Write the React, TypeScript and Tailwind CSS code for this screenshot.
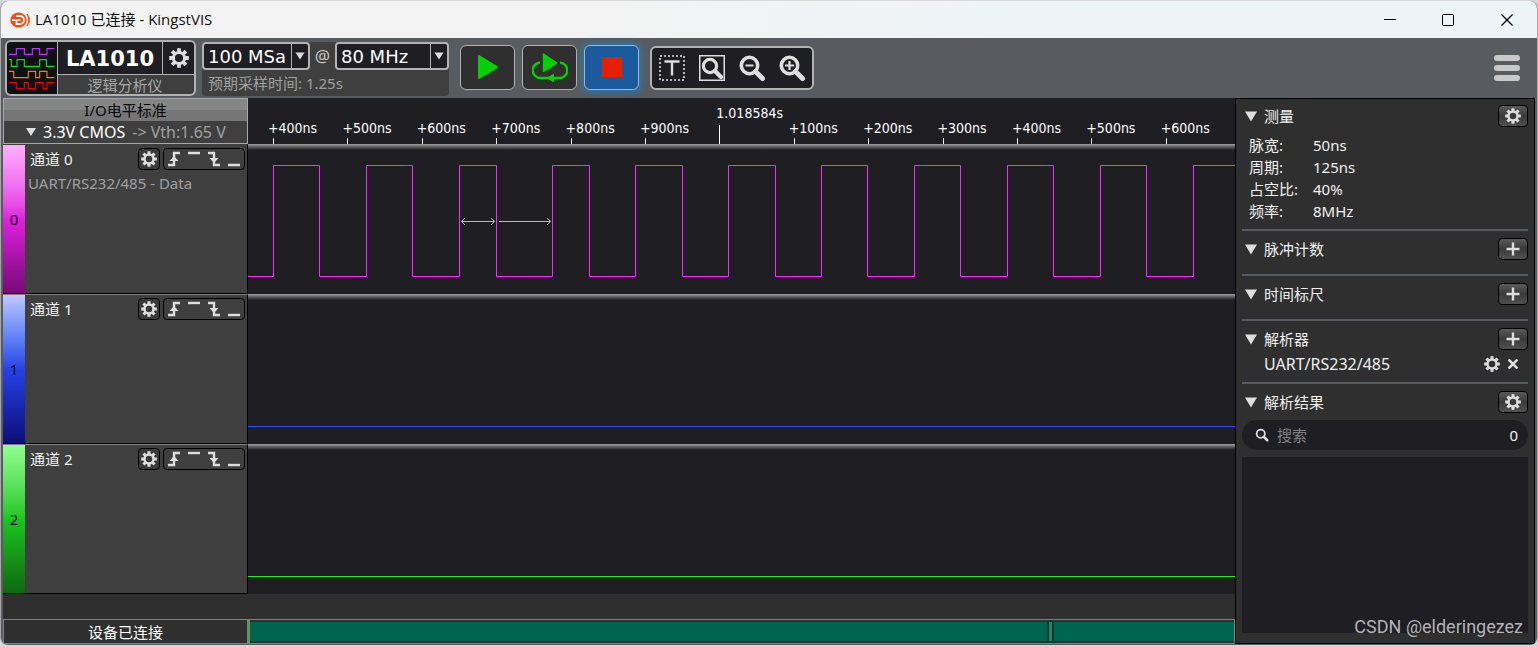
import React from 'react';

interface Channel {
    id: number;
    name: string;
    decoder?: string;
    bar: string;
    stroke: string;
    path: string;
}

const EDGES = [25, 71, 118, 164, 211, 248, 304, 341, 387, 434, 480, 527, 573, 619, 666, 712, 759, 805, 852, 898, 945];
const WAVE_WIDTH = 987;

const squareWave = EDGES.reduce(
    (path, x, i) => `${path}H${x + 0.5}V${i % 2 === 0 ? 21.5 : 132.5}`,
    'M0 132.5'
) + `H${WAVE_WIDTH}`;

const CHANNELS: Channel[] = [
    {
        id: 0,
        name: '通道 0',
        decoder: 'UART/RS232/485 - Data',
        bar: 'from-[#ffb0ff] via-[#e020e0] to-[#780a78]',
        stroke: '#ff28ff',
        path: squareWave,
    },
    {
        id: 1,
        name: '通道 1',
        bar: 'from-[#c0c8ff] via-[#2840e8] to-[#0c1078]',
        stroke: '#2850ff',
        path: `M0 132.5H${WAVE_WIDTH}`,
    },
    {
        id: 2,
        name: '通道 2',
        bar: 'from-[#90ff90] via-[#18c820] to-[#106810]',
        stroke: '#20f020',
        path: `M0 132.5H${WAVE_WIDTH}`,
    },
];

const TICKS = ['+400ns', '+500ns', '+600ns', '+700ns', '+800ns', '+900ns', '', '+100ns', '+200ns', '+300ns', '+400ns', '+500ns', '+600ns'];

const MEASUREMENTS = [
    ['脉宽:', '50ns'],
    ['周期:', '125ns'],
    ['占空比:', '40%'],
    ['频率:', '8MHz'],
];

const Gear = ({ className }: { className: string }) => (
    <svg viewBox="-10 -10 20 20" className={className} stroke="#dedede" fill="none">
        <circle r="5.6" strokeWidth="3" />
        {[0, 45, 90, 135, 180, 225, 270, 315].map(a => (
            <path key={a} d="M0 -6V-9.8" strokeWidth="3.8" transform={`rotate(${a})`} />
        ))}
    </svg>
);

const Plus = () => (
    <svg viewBox="0 0 14 14" className="size-3.5" stroke="#dedede" strokeWidth="2.4">
        <path d="M7 0.5V13.5M0.5 7H13.5" />
    </svg>
);

const Magnifier = ({ children, className = 'size-7' }: { children?: React.ReactNode; className?: string }) => (
    <svg viewBox="0 0 28 28" className={className} fill="none" stroke="#dedede">
        <circle cx="11.5" cy="11.5" r="8.2" strokeWidth="3.6" />
        <path d="M17.5 17.5L24.5 24.5" strokeWidth="5" strokeLinecap="round" />
        {children}
    </svg>
);

const TitleBar = () => (
    <header className="flex h-[37px] shrink-0 items-center bg-linear-to-r from-[#f3f3f3] from-40% to-[#ecf4f8] to-70% pl-2">
        <svg viewBox="0 0 22 18" className="mr-1 h-[18px] w-[22px]">
            <ellipse cx="9.5" cy="9" rx="8.2" ry="7.6" fill="#ff4a10" />
            <path d="M7 5H11A4 4 0 0 1 11 13H7.5V9.2M3 9.2H11.5" fill="none" stroke="#fff" strokeWidth="1.8" />
            <path d="M15.8 1.5A9 9 0 0 1 15.8 16.5" fill="none" stroke="#f3f3f3" strokeWidth="1.4" />
            <path d="M18 3A8.5 8.5 0 0 1 18 15A12 12 0 0 0 18 3Z" fill="#ff4a10" stroke="#ff4a10" strokeWidth="1" />
        </svg>
        <h1 className="pb-0.5 font-['Open_Sans','Noto_Sans_CJK_SC',sans-serif] text-[15px] leading-5 text-[#101010]">LA1010 已连接 - KingstVIS</h1>
        <div className="ml-auto flex h-full">
            <button aria-label="Minimize" className="grid w-[58px] place-items-center">
                <svg viewBox="0 0 12 12" className="size-3" stroke="#000"><path d="M0 5.5H12" /></svg>
            </button>
            <button aria-label="Maximize" className="grid w-[58px] place-items-center">
                <svg viewBox="0 0 12 12" className="size-3" stroke="#000" fill="none"><rect x="0.5" y="0.5" width="11" height="11" rx="1" /></svg>
            </button>
            <button aria-label="Close" className="grid w-[60px] place-items-center">
                <svg viewBox="0 0 12 12" className="size-3" stroke="#000" strokeWidth="1.2"><path d="M0.5 0.5L11.5 11.5M11.5 0.5L0.5 11.5" /></svg>
            </button>
        </div>
    </header>
);

const ToolbarSelect = ({ label, value, className }: { label: string; value: string; className: string }) => (
    <div className={`relative h-7 rounded border-2 border-[#b2b2b2] bg-[#1f1e23] ${className}`}>
        <select aria-label={label} className="h-full w-full appearance-none bg-transparent pt-px pl-1 font-['DejaVu_Sans',sans-serif] text-lg leading-6 text-white">
            <option>{value}</option>
        </select>
        <span className="pointer-events-none absolute inset-y-0 right-0 grid w-[17px] place-items-center border-l border-[#b2b2b2]">
            <svg viewBox="0 0 10 8" className="h-2 w-2.5"><path d="M0.5 0.5H9.5L5 7.5Z" fill="#dedede" /></svg>
        </span>
    </div>
);

const Toolbar = () => (
    <div className="flex h-[60px] shrink-0 items-center bg-[#585b5f] pl-1">
        <div className="flex h-14 w-[191px] overflow-hidden rounded-md border-2 border-[#b2b2b2] bg-[#3f3f3f]">
            <svg viewBox="22 126 150 156" className="h-[52px] w-[50px] bg-[#101012]" fill="none" strokeWidth="3.4">
                <path d="M28 163H50V146H74V163H98V146H120V163H142V146H164" stroke="#c030ff" />
                <path d="M28 179H35V199H52V179H74V199H120V179H140V199H164" stroke="#00e020" />
                <path d="M28 214H42V233H86V214H108V233H120V214H142V233H164" stroke="#ff8000" />
                <path d="M28 248H50V266H74V248H86V266H108V248H130V266H142V248H164" stroke="#f00000" />
            </svg>
            <div className="flex flex-1 flex-col border-l border-[#b2b2b2]">
                <div className="flex h-[33px] border-b border-[#b2b2b2] bg-[#1f1e23]">
                    <span className="flex-1 pt-px text-center font-['DejaVu_Sans',sans-serif] text-[21px] leading-8 font-bold text-white">LA1010</span>
                    <button aria-label="Device settings" className="grid w-8 place-items-center border-l border-[#b2b2b2]">
                        <Gear className="size-5" />
                    </button>
                </div>
                <span className="pr-0.5 text-center text-[15px] leading-5 text-[#a8a8a8]">逻辑分析仪</span>
            </div>
        </div>
        <div className="mt-0.5 ml-1.5 h-[54px] w-[247px] rounded bg-[#3f3f3f]">
            <div className="flex items-center justify-between">
                <ToolbarSelect label="Sample depth" value="100 MSa" className="w-[108px]" />
                <span className="text-[17px] leading-7 text-[#c8c8c8]">@</span>
                <ToolbarSelect label="Sample rate" value="80 MHz" className="w-[114px]" />
            </div>
            <p className="pl-1.5 text-[15px] leading-[26px] text-[#a0a0a0]">预期采样时间: 1.25s</p>
        </div>
        <div className="mb-0.5 ml-[11px] flex gap-[7px]">
            <button aria-label="Start" className="grid h-[45px] w-[55px] place-items-center rounded-md border border-[#b2b2b2] bg-[#2f2f2f]">
                <svg viewBox="0 0 22 26" className="h-[26px] w-[22px]"><path d="M2 2L20 13L2 24Z" fill="#00d200" stroke="#00d200" strokeWidth="2" strokeLinejoin="round" /></svg>
            </button>
            <button aria-label="Start repeated" className="grid h-[45px] w-[55px] place-items-center rounded-md border border-[#b2b2b2] bg-[#2f2f2f]">
                <svg viewBox="0 0 36 30" className="h-[30px] w-9" fill="none" stroke="#00d200">
                    <path d="M8 10.5A7.5 7.5 0 0 0 9 26H27A7.5 7.5 0 0 0 28 10.5" strokeWidth="2.4" />
                    <path d="M11.5 2L25 11L11.5 19.5Z" fill="#00d200" strokeWidth="1.4" strokeLinejoin="round" />
                    <path d="M15.5 26L21.5 22.3V29.7Z" fill="#00d200" />
                </svg>
            </button>
            <button aria-label="Stop" className="grid h-[45px] w-[55px] place-items-center rounded-md border border-[#b2b2b2] bg-[#1c5a9e] shadow-[0_0_6px_2px_#2878b4]">
                <span className="size-5 bg-[#e42000]" />
            </button>
        </div>
        <div className="ml-[11px] flex h-11 rounded-md border-2 border-[#b2b2b2] bg-[#1f1e23]">
            <button aria-label="Trigger position" className="grid w-10 place-items-center">
                <svg viewBox="0 0 26 26" className="size-[26px]" fill="none" stroke="#dedede">
                    <rect x="1" y="1" width="24" height="24" strokeWidth="1.6" strokeDasharray="2 2" />
                    <path d="M5.5 6.5H20.5M13 6.5V20.5" strokeWidth="2.4" />
                </svg>
            </button>
            <button aria-label="Zoom to fit" className="grid w-10 place-items-center">
                <svg viewBox="0 0 26 26" className="size-[26px]" fill="none" stroke="#dedede">
                    <rect x="0.75" y="0.75" width="24.5" height="24.5" strokeWidth="1.5" />
                    <circle cx="11" cy="11" r="6.6" strokeWidth="3.2" />
                    <path d="M16 16L22 22" strokeWidth="4.4" strokeLinecap="round" />
                </svg>
            </button>
            <button aria-label="Zoom out" className="grid w-10 place-items-center">
                <Magnifier><path d="M7.5 11.5H15.5" strokeWidth="2.2" /></Magnifier>
            </button>
            <button aria-label="Zoom in" className="grid w-10 place-items-center">
                <Magnifier><path d="M7 11.5H16M11.5 7V16" strokeWidth="2.2" /></Magnifier>
            </button>
        </div>
        <button aria-label="Menu" className="mr-[17px] ml-auto flex w-[26px] flex-col gap-1">
            <span className="h-1.5 w-full rounded-full bg-[#c8c8c8]" />
            <span className="h-1.5 w-full rounded-full bg-[#c8c8c8]" />
            <span className="h-1.5 w-full rounded-full bg-[#c8c8c8]" />
        </button>
    </div>
);

const TRIGGERS = [
    { label: 'Rising edge', path: 'M4 16H10V4H16', arrow: 'M5.5 12L10 7L14.5 12Z' },
    { label: 'High level', path: 'M4 4H16', arrow: '' },
    { label: 'Falling edge', path: 'M4 4H10V16H16', arrow: 'M5.5 9L10 14L14.5 9Z' },
    { label: 'Low level', path: 'M4 16H16', arrow: '' },
];

const ChannelRow = ({ channel }: { channel: Channel }) => (
    <div className="flex h-[150px] shrink-0">
        <div className={`flex w-[245px] shrink-0 border-t border-r border-b border-black bg-[#3f3f3f] ${channel.id > 0 ? 'border-t-[#7e7e7e]' : 'border-t-transparent'}`}>
            <span className={`grid w-[22px] shrink-0 place-items-center bg-linear-to-b text-[15px] text-[#101010] ${channel.bar}`}>{channel.id}</span>
            <div className="flex-1 pt-[3px] pr-0.5 pl-[3px]">
                <div className="flex h-[22px] items-center gap-[3px] pl-0.5">
                    <span className="flex-1 text-[15px] leading-[22px] text-[#f0f0f0]">{channel.name}</span>
                    <button aria-label={`${channel.name} settings`} className="grid size-[22px] place-items-center rounded border border-black bg-[#3a3a3a]">
                        <Gear className="size-4" />
                    </button>
                    <div className="flex h-[22px] rounded border border-black">
                        {TRIGGERS.map(t => (
                            <button key={t.label} aria-label={t.label}>
                                <svg viewBox="0 0 20 20" className="size-5" fill="none" stroke="#dedede" strokeWidth="2.4">
                                    <path d={t.path} />
                                    {t.arrow && <path d={t.arrow} fill="#dedede" stroke="none" />}
                                </svg>
                            </button>
                        ))}
                    </div>
                </div>
                {channel.decoder && <p className="text-[15px] leading-[26px] text-[#a0a0a0]">{channel.decoder}</p>}
            </div>
        </div>
        <div className="min-w-0 flex-1 bg-linear-to-b from-[#a0a0a0] to-[#1f1e23] to-[6px]">
            <svg viewBox={`0 0 ${WAVE_WIDTH} 150`} preserveAspectRatio="none" className="h-full w-full" fill="none">
                <path d={channel.path} stroke={channel.stroke} vectorEffect="non-scaling-stroke" />
                {/* pulse width and period arrows */}
                {channel.id === 0 && (
                    <path
                        d="M213 77.5H246.5M217 74L213.5 77.5L217 81M243 74L246.5 77.5L243 81M251 77.5H302.5M299 74L302.5 77.5L299 81"
                        stroke="#b8b8b8"
                        vectorEffect="non-scaling-stroke"
                    />
                )}
            </svg>
        </div>
    </div>
);

const Ruler = () => (
    <div className="flex h-[46px] shrink-0">
        <div className="flex w-[245px] shrink-0 flex-col border border-[#a8a8a8] bg-[#3f3f3f]">
            <div className="h-[22px] bg-linear-to-b from-[#868686] from-50% to-[#767676] to-50% text-center text-[15px] leading-[22px] text-[#080808]">I/O电平标准</div>
            <button className="flex flex-1 items-center gap-[7px] pl-[22px] text-base leading-5 text-white">
                <svg viewBox="0 0 10 8" className="h-2 w-2.5"><path d="M0 0H10L5 8Z" fill="#dedede" /></svg>
                <span>3.3V CMOS</span>
                <span className="text-[#a0a0a0]">-&gt; Vth:1.65 V</span>
            </button>
        </div>
        <div className="flex flex-1 bg-[#1f1e23] pl-5 font-['DejaVu_Sans_Condensed','DejaVu_Sans',sans-serif] text-sm text-white">
            {TICKS.map((tick, i) => (
                <div key={i} className="flex min-w-0 flex-1 flex-col justify-end whitespace-nowrap">
                    {tick ? (
                        <>
                            <span className="leading-5">{tick}</span>
                            <span className="ml-[5px] h-1.5 w-px bg-white" />
                        </>
                    ) : (
                        <>
                            <span className="pl-0.5 leading-5">1.018584s</span>
                            <span className="mt-0.5 ml-[5px] h-[19px] w-px bg-white" />
                        </>
                    )}
                </div>
            ))}
        </div>
    </div>
);

const StatusBar = () => (
    <div className="flex h-[25px] shrink-0 border border-[#808080] bg-[#2f2f2f]">
        <div className="w-[245px] border-r-2 border-[#808080] text-center text-[15px] leading-6 text-white">设备已连接</div>
        <div className="flex flex-1 border-l border-[#20c020] py-0.5">
            <span className="flex-1 bg-[#00654f]" />
            <span className="-my-0.5 w-[7px] shrink-0 border-2 border-[#0c3a30] bg-[#28806c]" />
            <span className="w-[180px] bg-[#00654f]" />
        </div>
    </div>
);

interface SectionProps {
    title: string;
    action: 'gear' | 'plus';
    className: string;
    children?: React.ReactNode;
}

const Section = ({ title, action, className, children }: SectionProps) => (
    <section className={className}>
        <div className="flex h-[22px] items-center justify-between pl-[3px]">
            <button className="flex items-center gap-[7px] text-[15px] leading-[22px] text-[#f0f0f0]">
                <svg viewBox="0 0 12 11" className="h-[11px] w-3"><path d="M0 0.5H12L6 10.5Z" fill="#dedede" /></svg>
                {title}
            </button>
            <button aria-label={`${title} ${action}`} className="grid h-[22px] w-[30px] place-items-center rounded border border-black bg-linear-to-b from-[#5a5a5a] via-[#3a3a3a] to-[#505050]">
                {action === 'gear' ? <Gear className="size-4" /> : <Plus />}
            </button>
        </div>
        {children}
    </section>
);

const SidePanel = () => (
    <aside className="flex w-[300px] shrink-0 flex-col border border-black bg-[#2f2f2f] px-1.5 pt-1.5 pb-2.5">
        <Section title="测量" action="gear" className="border-b-2 border-[#585b5f] pb-[7px]">
            <table className="mt-[7px] ml-[7px] text-[15px] text-[#f0f0f0]">
                <tbody>
                    {MEASUREMENTS.map(([name, value]) => (
                        <tr key={name} className="h-[22px]">
                            <th className="w-16 p-0 text-left leading-[22px] font-normal">{name}</th>
                            <td className="p-0 leading-[22px]">{value}</td>
                        </tr>
                    ))}
                </tbody>
            </table>
        </Section>
        <Section title="脉冲计数" action="plus" className="border-b-2 border-[#585b5f] pt-[7px] pb-3.5" />
        <Section title="时间标尺" action="plus" className="border-b-2 border-[#585b5f] pt-[7px] pb-3.5" />
        <Section title="解析器" action="plus" className="border-b-2 border-[#585b5f] pt-[7px] pb-[7px]">
            <div className="mt-[3px] flex h-[22px] items-center gap-2 pr-2.5 pl-[22px]">
                <span className="flex-1 text-base leading-[22px] text-[#f0f0f0]">UART/RS232/485</span>
                <button aria-label="Decoder settings"><Gear className="size-4" /></button>
                <button aria-label="Remove decoder">
                    <svg viewBox="0 0 10 10" className="size-2.5" stroke="#dedede" strokeWidth="2.6"><path d="M0.5 0.5L9.5 9.5M9.5 0.5L0.5 9.5" /></svg>
                </button>
            </div>
        </Section>
        <Section title="解析结果" action="gear" className="pt-[7px]" />
        <div className="mt-[7px] flex h-[30px] shrink-0 items-center gap-2 rounded-full bg-[#1f1e23] pr-2.5 pl-[13px] text-[15px]">
            <Magnifier className="size-3.5" />
            <input aria-label="搜索" placeholder="搜索" className="min-w-0 flex-1 bg-transparent text-white outline-none placeholder:text-[#808080]" />
            <span className="text-[#f0f0f0]">0</span>
        </div>
        <div className="mt-[7px] flex-1 bg-[#1f1e23]" />
    </aside>
);

export default function App() {
    return (
        <div className="h-screen bg-[#d4d6d8] pt-px pb-0.5 font-['Noto_Sans','Noto_Sans_CJK_SC',sans-serif]">
            <div className="relative flex h-full flex-col overflow-hidden rounded-lg border-x border-[#a8a8a8] bg-[#585b5f]">
                <TitleBar />
                <Toolbar />
                <div className="flex min-h-0 flex-1 px-0.5 pb-px">
                    <main className="flex min-w-0 flex-1 flex-col bg-[#2f2f2f]">
                        <Ruler />
                        {CHANNELS.map(c => (
                            <ChannelRow key={c.id} channel={c} />
                        ))}
                        <div className="flex-1" />
                        <StatusBar />
                    </main>
                    <SidePanel />
                </div>
                <span className="absolute right-3.5 bottom-1.5 font-['Roboto',sans-serif] text-lg leading-6 text-[#b4b4b6]">CSDN @elderingezez</span>
            </div>
        </div>
    );
}
